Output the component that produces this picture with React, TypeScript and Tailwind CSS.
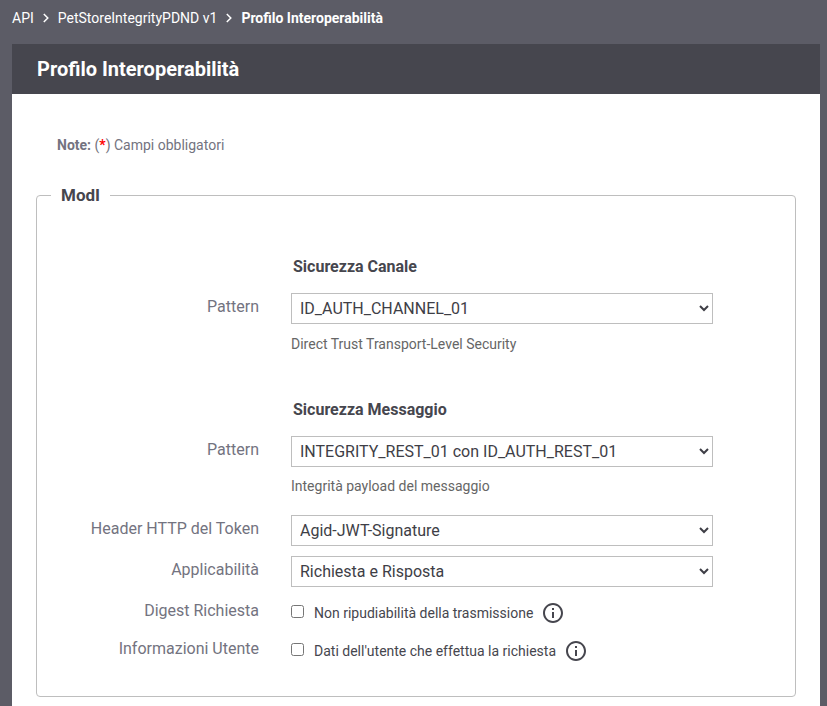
import React from "react";

function Chevron() {
  return (
    <svg className="mx-[6px] h-3 w-3" viewBox="0 0 12 12" fill="none" stroke="white" strokeWidth="1.5">
      <path d="M3.8 2 7.8 6 3.8 10" />
    </svg>
  );
}

function Info() {
  return (
    <svg className="ml-[7.600px] h-6 w-6" viewBox="0 0 24 24" fill="#46464e">
      <path d="M11 7h2v2h-2zm0 4h2v6h-2zm1-9C6.48 2 2 6.48 2 12s4.480 10 10 10 10-4.480 10-10S17.520 2 12 2zm0 18c-4.410 0-8-3.590-8-8s3.590-8 8-8 8 3.590 8 8-3.590 8-8 8z" />
    </svg>
  );
}

function Row({ label, value, className }: { label: string; value: string; className: string }) {
  return (
    <div className={"flex " + className}>
      <label className="w-[222px] shrink-0 pt-px text-right leading-[25px] text-[#737380]">{label}</label>
      <select className="ml-8 h-[31px] w-[422px] rounded-none border border-[#bebebe] bg-white px-1 text-[#3e3e46]">
        <option>{value}</option>
      </select>
    </div>
  );
}

function CheckRow({ label, text }: { label: string; text: string }) {
  return (
    <div className="flex h-[38px]">
      <label className="w-[222px] shrink-0 text-right leading-[25px] text-[#737380]">{label}</label>
      <div className="ml-8 flex h-[30px] items-center text-sm text-[#46464e]">
        <input type="checkbox" className="mb-[3px] mr-[10px] h-[13px] w-[13px]" />
        {text}
        <Info />
      </div>
    </div>
  );
}

export default function App() {
  return (
    <div className="h-[706px] w-[827px] overflow-hidden bg-[#5c5c66] font-[Roboto,sans-serif] text-base">
      <nav className="flex h-11 items-center pb-2 pl-3 text-sm text-white">
        API
        <Chevron />
        PetStoreIntegrityPDND v1
        <Chevron />
        <b className="font-bold">Profilo Interoperabilità</b>
      </nav>
      <main className="ml-3 h-[662px] w-[808px] bg-white">
        <h1 className="h-[50px] bg-[#46464e] pl-[25px] text-xl font-bold leading-[50px] text-white">Profilo Interoperabilità</h1>
        <p className="ml-[45px] pt-[41px] text-sm leading-5 text-[#737380]">
          <b>Note:</b> (<b className="text-[#ff0000]">*</b>) Campi obbligatori
        </p>
        <fieldset className="ml-6 mt-[28px] h-[514px] w-[760px] rounded border border-[#bebebe]">
          <legend className="ml-[14px] px-[10px] text-[17px] font-bold leading-[25px] text-[#46464e]">ModI</legend>
          <h2 className="ml-[256px] mt-[47px] font-bold leading-6 text-[#46464e]">Sicurezza Canale</h2>
          <Row className="mt-[14px]" label="Pattern" value="ID_AUTH_CHANNEL_01" />
          <p className="ml-[254px] mt-[10px] text-sm leading-5 text-[#666666]">Direct Trust Transport-Level Security</p>
          <h2 className="ml-[256px] mt-[44px] font-bold leading-6 text-[#46464e]">Sicurezza Messaggio</h2>
          <Row className="mt-[14px]" label="Pattern" value="INTEGRITY_REST_01 con ID_AUTH_REST_01" />
          <p className="ml-[254px] mt-[9px] text-sm leading-5 text-[#666666]">Integrità payload del messaggio</p>
          <Row className="mt-[19px]" label="Header HTTP del Token" value="Agid-JWT-Signature" />
          <Row className="mt-[10px]" label="Applicabilità" value="Richiesta e Risposta" />
          <div className="mt-[11px]">
            <CheckRow label="Digest Richiesta" text="Non ripudiabilità della trasmissione" />
            <CheckRow label="Informazioni Utente" text="Dati dell'utente che effettua la richiesta" />
          </div>
        </fieldset>
      </main>
    </div>
  );
}
